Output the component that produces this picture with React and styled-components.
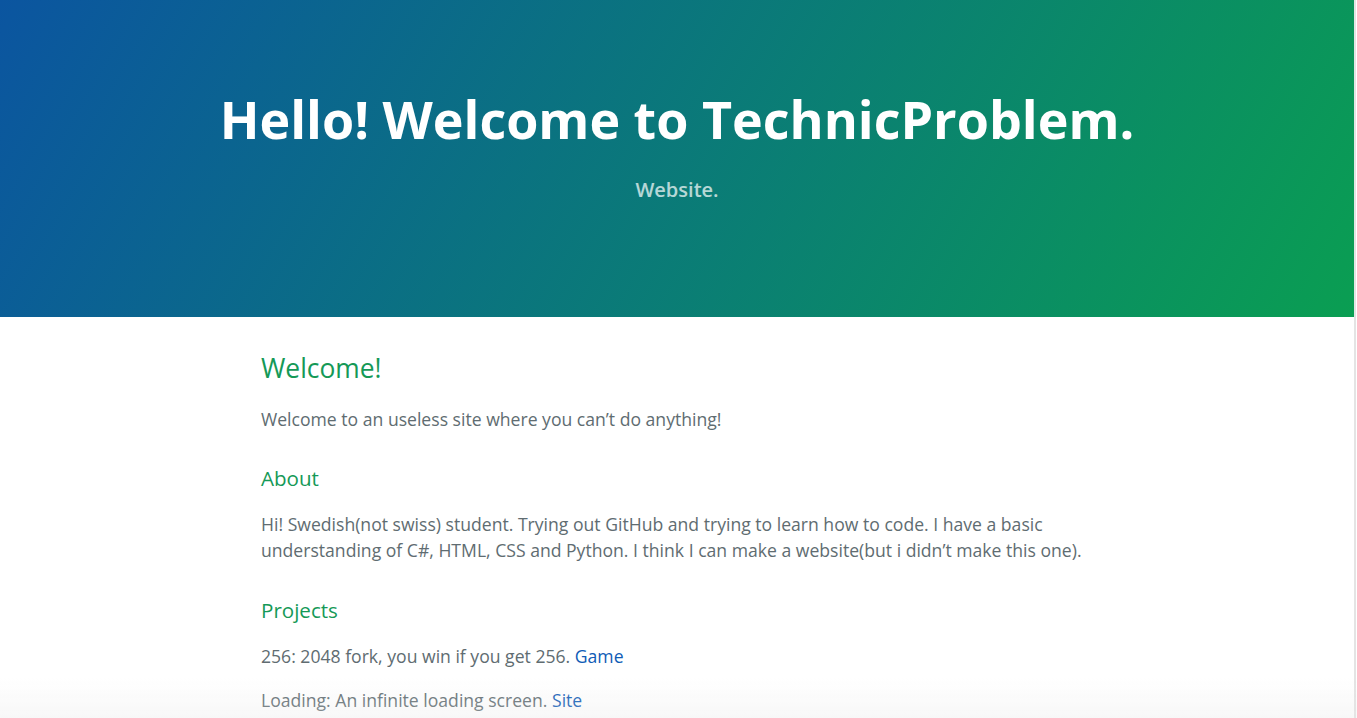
import React from 'react';
import styled, { createGlobalStyle } from 'styled-components';

const GlobalStyle = createGlobalStyle`
    html, body {
        margin: 0;
        padding: 0;
        background: #fff;
    }

    body {
        font-family: "Open Sans", "Helvetica Neue", "Liberation Sans", Arial, sans-serif;
        font-size: 16px;
        line-height: 1.5;
        color: #606c71;
        overflow: hidden;
    }

    * {
        box-sizing: border-box;
    }
`

const projects = [
    { text: '256: 2048 fork, you win if you get 256.', link: 'Game' },
    { text: 'Loading: An infinite loading screen.', link: 'Site' },
]

export default function App() {
    return (
        <>
            <GlobalStyle />
            <Page>
                <PageHeader>
                    <ProjectName>Hello! Welcome to TechnicProblem.</ProjectName>
                    <ProjectTagline>Website.</ProjectTagline>
                </PageHeader>

                <MainContent>
                    <h2>Welcome!</h2>
                    <p>Welcome to an useless site where you can’t do anything!</p>

                    <h3>About</h3>
                    <p>
                        Hi! Swedish(not swiss) student. Trying out GitHub and trying to learn how to code. I have a basic
                        understanding of C#, HTML, CSS and Python. I think I can make a website(but i didn’t make this one).
                    </p>

                    <h3>Projects</h3>
                    {projects.map(p => (
                        <p key={p.link}>
                            {p.text} <a href="#">{p.link}</a>
                        </p>
                    ))}
                </MainContent>
            </Page>
            {/* window shadow at the bottom edge of the screenshot */}
            <BottomFade />
        </>
    )
}

const Page = styled.div`
    width: calc(100vw - 1px);
    min-height: 100vh;
    border-right: 2px solid #e4e4e4;
`

const PageHeader = styled.section`
    color: #fff;
    text-align: center;
    background-color: #0a9e52;
    background-image: linear-gradient(120deg, #0b55a0, #0a9e52);
    padding: 5rem 6rem;
`

const ProjectName = styled.h1`
    margin: 0 0 0.1rem 0;
    font-size: 3.25rem;
    font-weight: 700;
    line-height: 1.5;
`

const ProjectTagline = styled.h2`
    margin: 0.83em 0 2rem 0;
    font-size: 1.25rem;
    font-weight: 600;
    line-height: 1.5;
    opacity: 0.7;
`

const MainContent = styled.section`
    max-width: 64rem;
    margin: 0 auto;
    padding: 2rem 6rem;
    font-size: 1.1rem;
    word-wrap: break-word;

    h2, h3 {
        margin-top: 2rem;
        margin-bottom: 1rem;
        font-weight: normal;
        color: #159957;
        line-height: 1.5;
    }

    h2 {
        font-size: 1.5em;
    }

    h3 {
        font-size: 1.17em;
        line-height: 1.42;
    }

    & > :first-child {
        margin-top: 0;
    }

    p {
        margin: 1em 0;
    }

    a {
        color: #0f5cb6;
        text-decoration: none;
    }
`

const BottomFade = styled.div`
    position: fixed;
    left: 0;
    right: 0;
    bottom: 0;
    height: 40px;
    pointer-events: none;
    background: linear-gradient(to bottom, rgba(230, 230, 230, 0), rgba(230, 230, 230, 0.3));
`
